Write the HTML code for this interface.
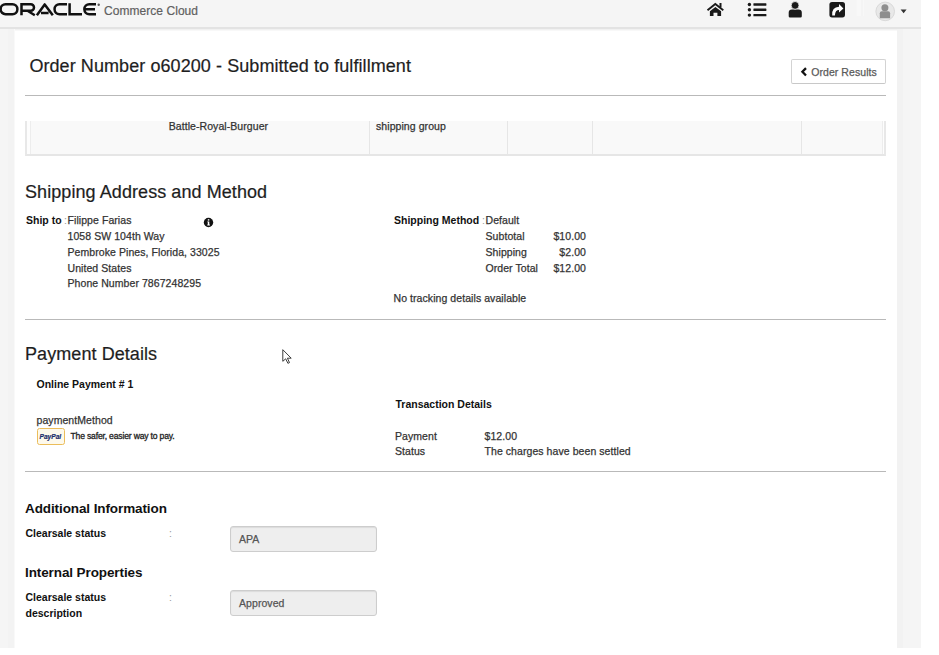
<!DOCTYPE html>
<html><head><meta charset="utf-8">
<style>
*{margin:0;padding:0;box-sizing:border-box}
html,body{width:939px;height:655px;overflow:hidden;background:#fff;font-family:"Liberation Sans",sans-serif;color:#333;position:relative}
.a{position:absolute;white-space:nowrap;line-height:1}
#hdr{position:absolute;left:0;top:0;width:921px;height:27px;background:#f5f5f5}
#hdrb{position:absolute;left:0;top:27px;width:921px;height:2px;background:#e3e3e3;box-shadow:0 1px 0 #f1f1f1,0 2px 0 #f8f8f8}
#lstrip{position:absolute;left:0;top:29px;width:15px;height:619px;background:linear-gradient(90deg,#f5f5f5 0,#f5f5f5 8px,#f3f3f3 8px,#f3f3f3 14px,#f9f9f9 14px)}
#rstrip{position:absolute;left:897px;top:29px;width:24px;height:619px;background:linear-gradient(90deg,#f2f2f2 0,#f2f2f2 6px,#f5f5f5 6px)}
.h2{font-size:18px;color:#1e1e1e;letter-spacing:0.075px;-webkit-text-stroke:0.2px #1e1e1e}
.t{font-size:10.5px;color:#333;letter-spacing:0.07px;-webkit-text-stroke:0.25px currentColor}
.h3{font-size:13.5px;font-weight:bold;color:#111;letter-spacing:-0.1px}
.t.b{font-weight:bold;color:#111;letter-spacing:0;-webkit-text-stroke:0}
.hr{position:absolute;height:1px;background:#b9b9b9}
.vl{position:absolute;top:121px;width:1px;height:33px;background:#e6e6e6}
</style></head><body>
<div id="hdr"></div>
<div id="hdrb"></div>
<div id="lstrip"></div>
<div id="rstrip"></div>

<!-- logo -->
<svg class="a" style="left:0;top:0" width="104" height="20" viewBox="0 0 104 20">
 <g fill="none" stroke="#111" stroke-width="2.5">
  <rect x="0.6" y="4.3" width="16.8" height="9.9" rx="4.95"/>
  <path d="M21.5 15.3V4.3H30.75A3.25 3.25 0 0 1 30.75 10.8H21.5M27.5 10.8L34.8 15.3"/>
  <path d="M36.9 15.3L44.7 4.4L52.8 15.3M41 12.9H48.6" stroke-linejoin="round"/>
  <path d="M67 4.3H59.5A4.95 4.95 0 0 0 59.5 14.2H67"/>
  <path d="M69.6 3.2V14.2H82"/>
  <path d="M96 4.3H89.3A4.95 4.95 0 0 0 89.3 14.2H96M85 9.2H95"/>
 </g>
 <circle cx="98.7" cy="4.8" r="1.2" fill="#555"/>
</svg>
<div class="a" style="left:104px;top:4.7px;font-size:12px;color:#606060;letter-spacing:0.05px;-webkit-text-stroke:0.2px #606060">Commerce Cloud</div>

<!-- header icons -->
<svg class="a" style="left:700px;top:0" width="221" height="26" viewBox="700 0 221 26">
 <!-- home -->
 <path d="M707.5 10.2L715.3 4L723.3 10.2" fill="none" stroke="#1a1a1a" stroke-width="1.9" stroke-linejoin="miter"/>
 <rect x="719.5" y="3" width="2" height="4.4" fill="#1a1a1a"/>
 <path d="M709.9 11.2L715.4 7L721.1 11.2V16H717.4V12.8H713.5V16H709.9Z" fill="#1a1a1a"/>
 <!-- list -->
 <circle cx="749.4" cy="4.5" r="1.7" fill="#1a1a1a"/>
 <circle cx="749.4" cy="9.7" r="1.7" fill="#1a1a1a"/>
 <circle cx="749.4" cy="15.1" r="1.7" fill="#1a1a1a"/>
 <rect x="753.4" y="3.3" width="13" height="2.4" rx="0.4" fill="#1a1a1a"/>
 <rect x="753.4" y="8.5" width="13" height="2.4" rx="0.4" fill="#1a1a1a"/>
 <rect x="753.4" y="13.9" width="13" height="2.4" rx="0.4" fill="#1a1a1a"/>
 <!-- user -->
 <path d="M788.7 17.6V12.6Q788.7 9.4 792 9.4H798.5Q801.8 9.4 801.8 12.6V16.3Q801.8 17.6 800.5 17.6H790Q788.7 17.6 788.7 16.3Z" fill="#1a1a1a"/>
 <circle cx="795.1" cy="5.4" r="3.9" fill="#1a1a1a" stroke="#f5f5f5" stroke-width="0.8"/>
 <!-- share -->
 <rect x="829.4" y="2" width="15.6" height="15.4" rx="2.6" fill="#1a1a1a"/>
 <path d="M839 6.8V3.9L843.4 8.4L839 12.6V10.1Q835.2 10.1 834.9 15.4H832.2Q831.6 7.1 839 6.8Z" fill="#fff"/>
 <!-- divider -->
 <rect x="856.5" y="0" width="7.5" height="16" fill="#f8f8f8"/><rect x="861.5" y="0" width="1" height="16" fill="#efefef"/>
 <!-- avatar -->
 <circle cx="885.2" cy="11.4" r="9.3" fill="#e8e8e8" stroke="#d9d9d9" stroke-width="1"/>
 <circle cx="884.9" cy="7.8" r="3.5" fill="#8e8e8e"/>
 <path d="M879.8 18.2V13.3Q879.8 11.3 881.8 11.3H888.1Q890.1 11.3 890.1 13.3V18.2Z" fill="#8e8e8e"/>
 <path d="M900.6 9.4H906.6L903.6 13.3Z" fill="#333"/>
</svg>

<div class="a h2" style="left:29.4px;top:57.3px">Order Number o60200 - Submitted to fulfillment</div>
<div class="a" style="left:791px;top:59px;width:95px;height:25px;border:1px solid #d3d3d3;border-bottom-color:#c8c8c8;border-radius:2px;background:#fff"></div>
<svg class="a" style="left:800px;top:67px" width="8" height="10" viewBox="0 0 8 10"><path d="M6 1.1L2.4 4.8L6 8.5" fill="none" stroke="#111" stroke-width="2.3"/></svg>
<div class="a t" style="left:811.2px;top:66.9px;color:#5a5a5a">Order Results</div>
<div class="hr" style="left:25px;top:95px;width:861px"></div>

<!-- table -->
<div class="a" style="left:25px;top:121px;width:861px;height:35px;background:#fdfdfd;border-left:2px solid #e8e8e8;border-right:2px solid #e8e8e8;border-bottom:2px solid #e6e6e6"></div>
<div class="a" style="left:29.5px;top:121px;width:853px;height:33px;background:#f9f9f9;border-left:1.5px solid #ededed;border-right:1.5px solid #ededed"></div>
<div class="vl" style="left:369px"></div>
<div class="vl" style="left:506.6px"></div>
<div class="vl" style="left:592px"></div>
<div class="vl" style="left:801px"></div>
<div class="a t" style="left:168.7px;top:121.4px">Battle-Royal-Burguer</div>
<div class="a t" style="left:376px;top:121.4px">shipping group</div>

<div class="a h2" style="left:25px;top:183.3px">Shipping Address and Method</div>
<div class="a t b" style="left:26px;top:215.3px">Ship to</div>
<div class="a t" style="left:64px;top:215.3px;color:#999;-webkit-text-stroke:0">:</div>
<div class="a t" style="left:67.5px;top:215.3px">Filippe Farias</div>
<div class="a t" style="left:67.5px;top:230.9px">1058 SW 104th Way</div>
<div class="a t" style="left:67.5px;top:246.6px">Pembroke Pines, Florida, 33025</div>
<div class="a t" style="left:67.5px;top:262.8px">United States</div>
<div class="a t" style="left:67.5px;top:278.1px">Phone Number 7867248295</div>
<svg class="a" style="left:202.5px;top:216.9px" width="11" height="11" viewBox="0 0 11 11"><circle cx="5.5" cy="5.5" r="4.7" fill="#111"/><path d="M4.3 4.4H6.3V7.6H6.9V8.5H4.3V7.6H4.8V5.2H4.3Z" fill="#fff"/><rect x="4.8" y="2.2" width="1.5" height="1.4" fill="#fff"/></svg>

<div class="a t b" style="left:394px;top:215.3px">Shipping Method</div>
<div class="a t" style="left:482px;top:215.3px;color:#999;-webkit-text-stroke:0">:</div>
<div class="a t" style="left:485.5px;top:215.3px">Default</div>
<div class="a t" style="left:485.5px;top:230.9px">Subtotal</div>
<div class="a t" style="left:485.5px;top:246.6px">Shipping</div>
<div class="a t" style="left:485.5px;top:262.8px">Order Total</div>
<div class="a t" style="left:535px;top:230.9px;width:51px;text-align:right">$10.00</div>
<div class="a t" style="left:535px;top:246.6px;width:51px;text-align:right">$2.00</div>
<div class="a t" style="left:535px;top:262.8px;width:51px;text-align:right">$12.00</div>
<div class="a t" style="left:393.5px;top:293.3px">No tracking details available</div>
<div class="hr" style="left:25px;top:319px;width:861px"></div>

<div class="a h2" style="left:25px;top:344.6px">Payment Details</div>
<svg class="a" style="left:278px;top:346px" width="18" height="20" viewBox="278 346 18 20"><path d="M282.8 349.7L282.8 361.3L285.7 358.8L287.9 363.3L289.5 362.6L287.4 358.2L291.2 358.2Z" fill="#fff" stroke="#333" stroke-width="0.95" stroke-linejoin="round"/></svg>
<div class="a t b" style="left:36.5px;top:378.7px">Online Payment # 1</div>
<div class="a t b" style="left:395.5px;top:398.7px">Transaction Details</div>
<div class="a t" style="left:36.5px;top:414.9px">paymentMethod</div>
<div class="a" style="left:37px;top:428px;width:28px;height:17px;border:1px solid #ebbd5a;border-radius:2.5px;background:#fdf9ec"></div>
<div class="a" style="left:39.5px;top:433.5px;font-size:6.6px;font-weight:bold;font-style:italic;color:#1b2d6b;-webkit-text-stroke:0.2px #1b2d6b">PayPal</div>
<div class="a" style="left:70.5px;top:432.2px;font-size:8.6px;letter-spacing:-0.18px;color:#222;-webkit-text-stroke:0.3px #222">The safer, easier way to pay.</div>
<div class="a t" style="left:395px;top:430.7px">Payment</div>
<div class="a t" style="left:484.5px;top:430.7px">$12.00</div>
<div class="a t" style="left:395px;top:445.9px">Status</div>
<div class="a t" style="left:484.5px;top:445.9px">The charges have been settled</div>
<div class="hr" style="left:25px;top:471px;width:861px"></div>

<div class="a h3" style="left:25px;top:501.5px">Additional Information</div>
<div class="a t b" style="left:25.5px;top:528.1px">Clearsale status</div>
<div class="a t" style="left:169px;top:528.1px;color:#999;-webkit-text-stroke:0">:</div>
<div class="a" style="left:229.5px;top:526px;width:147.5px;height:26px;background:#eee;border:1px solid #cdcdcd;border-radius:3px;box-shadow:inset 0 1px 1px rgba(0,0,0,.08)"></div>
<div class="a t" style="left:239px;top:533.6px;color:#555">APA</div>

<div class="a h3" style="left:25px;top:565.8px">Internal Properties</div>
<div class="a t b" style="left:25.5px;top:592.3px">Clearsale status</div>
<div class="a t b" style="left:25.5px;top:608.3px">description</div>
<div class="a t" style="left:169px;top:592.3px;color:#999;-webkit-text-stroke:0">:</div>
<div class="a" style="left:229.5px;top:590px;width:147.5px;height:26px;background:#eee;border:1px solid #cdcdcd;border-radius:3px;box-shadow:inset 0 1px 1px rgba(0,0,0,.08)"></div>
<div class="a t" style="left:239px;top:597.5px;color:#555">Approved</div>
</body></html>
